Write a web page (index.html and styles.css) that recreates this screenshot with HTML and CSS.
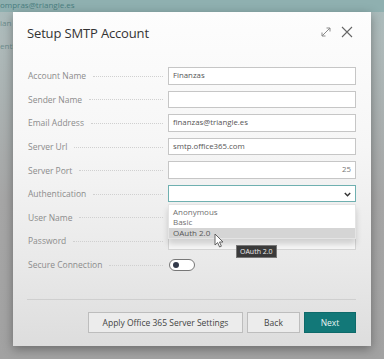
FILE: index.html
```html
<!DOCTYPE html>
<html>
<head>
<meta charset="utf-8">
<link rel="stylesheet" href="styles.css">
</head>
<body>
<div class="backdrop">
  <div class="bg-top">ompras@triangle.es</div>
  <div class="bg-frag f1">ian</div>
  <div class="bg-frag f2">enti</div>
</div>
<div class="page">
  <div class="dialog">
    <div class="head">
      <h1 class="title">Setup SMTP Account</h1>
      <div class="head-icons">
        <svg class="ico" width="12" height="12" viewBox="0 0 12 12"><path d="M2 10 L10 2 M6.5 2 H10 V5.5 M2 6.5 V10 H5.5" fill="none" stroke="#8a8a8a" stroke-width="1"/></svg>
        <svg class="ico" width="12" height="12" viewBox="0 0 12 12"><path d="M1 1 L11 11 M11 1 L1 11" fill="none" stroke="#666" stroke-width="1.1"/></svg>
      </div>
    </div>
    <div class="form">
      <div class="row"><div class="lbl"><span>Account Name</span><i class="dots"></i></div><div class="inp">Finanzas</div></div>
      <div class="row"><div class="lbl"><span>Sender Name</span><i class="dots"></i></div><div class="inp"></div></div>
      <div class="row"><div class="lbl"><span>Email Address</span><i class="dots"></i></div><div class="inp">finanzas@triangle.es</div></div>
      <div class="row"><div class="lbl"><span>Server Url</span><i class="dots"></i></div><div class="inp">smtp.office365.com</div></div>
      <div class="row"><div class="lbl"><span>Server Port</span><i class="dots"></i></div><div class="inp num">25</div></div>
      <div class="row"><div class="lbl"><span>Authentication</span><i class="dots"></i></div>
        <div class="inp sel">
          <svg class="chev" width="7" height="5" viewBox="0 0 7 5"><path d="M0.8 1 L3.5 3.8 L6.2 1" fill="none" stroke="#333" stroke-width="1.4"/></svg>
          <div class="list">
            <div class="opt">Anonymous</div>
            <div class="opt">Basic</div>
            <div class="opt hl">OAuth 2.0</div>
          </div>
          <svg class="cursor" width="11" height="15" viewBox="0 0 11 15"><path d="M1 1 V12 L3.6 9.6 L5.6 14 L7.4 13.2 L5.5 9 H9 Z" fill="#fff" stroke="#555" stroke-width="0.9"/></svg>
          <div class="tip">OAuth 2.0</div>
        </div>
      </div>
      <div class="row"><div class="lbl"><span>User Name</span><i class="dots"></i></div><div class="inp"></div></div>
      <div class="row"><div class="lbl"><span>Password</span><i class="dots"></i></div><div class="inp pw"></div></div>
      <div class="row"><div class="lbl"><span>Secure Connection</span><i class="dots"></i></div><div class="toggle"><i class="knob"></i></div></div>
    </div>
    <div class="foot">
      <button class="btn apply">Apply Office 365 Server Settings</button>
      <button class="btn back">Back</button>
      <button class="btn next">Next</button>
    </div>
  </div>
</div>
</body>
</html>
```
FILE: styles.css
```css
* { box-sizing: border-box; }
html, body { margin: 0; padding: 0; }
body {
  width: 384px;
  height: 359px;
  overflow: hidden;
  position: relative;
  font-family: "Open Sans", "Liberation Sans", sans-serif;
  background: linear-gradient(180deg, #a9bcbc 0px, #aebaba 40px, #a6a6a6 200px, #a2a2a2 359px);
}
.backdrop { position: absolute; inset: 0; }
.bg-top {
  height: 12px;
  background: #8fb0b0;
  color: #4a7f80;
  font-size: 8px;
  line-height: 10px;
}
.bg-frag { position: absolute; left: 0; font-size: 8px; color: #6b8d8d; }
.f1 { top: 17px; }
.f2 { top: 40px; }
.page { position: relative; padding: 12px 13px 0 13px; }
.dialog {
  width: 358px;
  height: 334px;
  background: linear-gradient(180deg, #fdfdfd 0%, #f6f6f6 40%, #e9e9e9 75%, #dddddd 100%);
  box-shadow: 0 3px 10px rgba(0,0,0,0.35);
  padding: 0 15px 0 14px;
  display: flex;
  flex-direction: column;
}
.head {
  display: flex;
  align-items: center;
  justify-content: space-between;
  height: 40px;
}
.title {
  margin: 0;
  font-size: 13px;
  font-weight: 500;
  color: #333;
  letter-spacing: -0.15px;
  padding-top: 1px;
}
.head-icons { display: flex; gap: 9px; margin-right: 3px; align-items: center; }
.form {
  margin-top: 15px;
  display: grid;
  grid-auto-rows: 23.6px;
}
.row {
  display: grid;
  grid-template-columns: 141px 188px;
  align-items: start;
}
.lbl {
  display: flex;
  align-items: center;
  height: 17.5px;
  font-size: 8.5px;
  color: #8c8c8c;
  padding-right: 5px;
  padding-left: 1px;
}
.lbl span { white-space: nowrap; }
.dots {
  flex: 1;
  height: 0;
  border-top: 1px dotted #d0d0d0;
  margin-left: 7px;
  margin-top: 1px;
}
.inp {
  position: relative;
  height: 17.5px;
  border: 1px solid #c6c6c6;
  background: #fff;
  font-size: 7.8px;
  color: #555;
  padding: 0 4px;
  line-height: 15.5px;
}
.inp.num { text-align: right; color: #777; }
.inp.sel { border-color: #6fb0b0; }
.inp.pw { background: #f7f7f7; border-color: #d4d4d4; }
.chev { position: absolute; right: 4px; top: 6px; }
.list {
  position: absolute;
  left: -1px;
  right: -1px;
  top: 18px;
  height: 35px;
  background: #fff;
  border: 1px solid #e4e4e4;
  box-shadow: 0 5px 6px rgba(0,0,0,0.16);
  padding-top: 2px;
  z-index: 2;
}
.opt {
  font-size: 8px;
  color: #707070;
  line-height: 10.5px;
  padding-left: 4px;
  height: 10.5px;
}
.opt.hl { background: #d5d5d5; color: #555; }
.cursor { position: absolute; left: 45px; top: 47px; z-index: 4; }
.tip {
  position: absolute;
  left: 67px;
  top: 59px;
  background: #3a3a3a;
  color: #eee;
  font-size: 7px;
  line-height: 11px;
  padding: 0 3px;
  border: 1px solid #777;
  z-index: 4;
}
.toggle {
  margin-top: 3px;
  margin-left: 1px;
  width: 26px;
  height: 12px;
  border: 1px solid #777;
  border-radius: 6px;
  background: #fff;
  display: flex;
  align-items: center;
  padding-left: 3px;
}
.knob { width: 6px; height: 6px; border-radius: 50%; background: #333a4a; }
.foot {
  margin-top: 20px;
  border-top: 1px solid #cfcfcf;
  display: flex;
  justify-content: flex-end;
  gap: 4px;
  padding-top: 12px;
}
.btn {
  height: 21px;
  font-family: inherit;
  font-size: 8.5px;
  color: #444;
  background: #ececec;
  border: 1px solid #bdbdbd;
  padding: 0;
}
.apply { width: 155px; }
.back { width: 53px; }
.next { width: 52px; background: #127878; border-color: #0e6a6a; color: #e8f4f4; }
```
